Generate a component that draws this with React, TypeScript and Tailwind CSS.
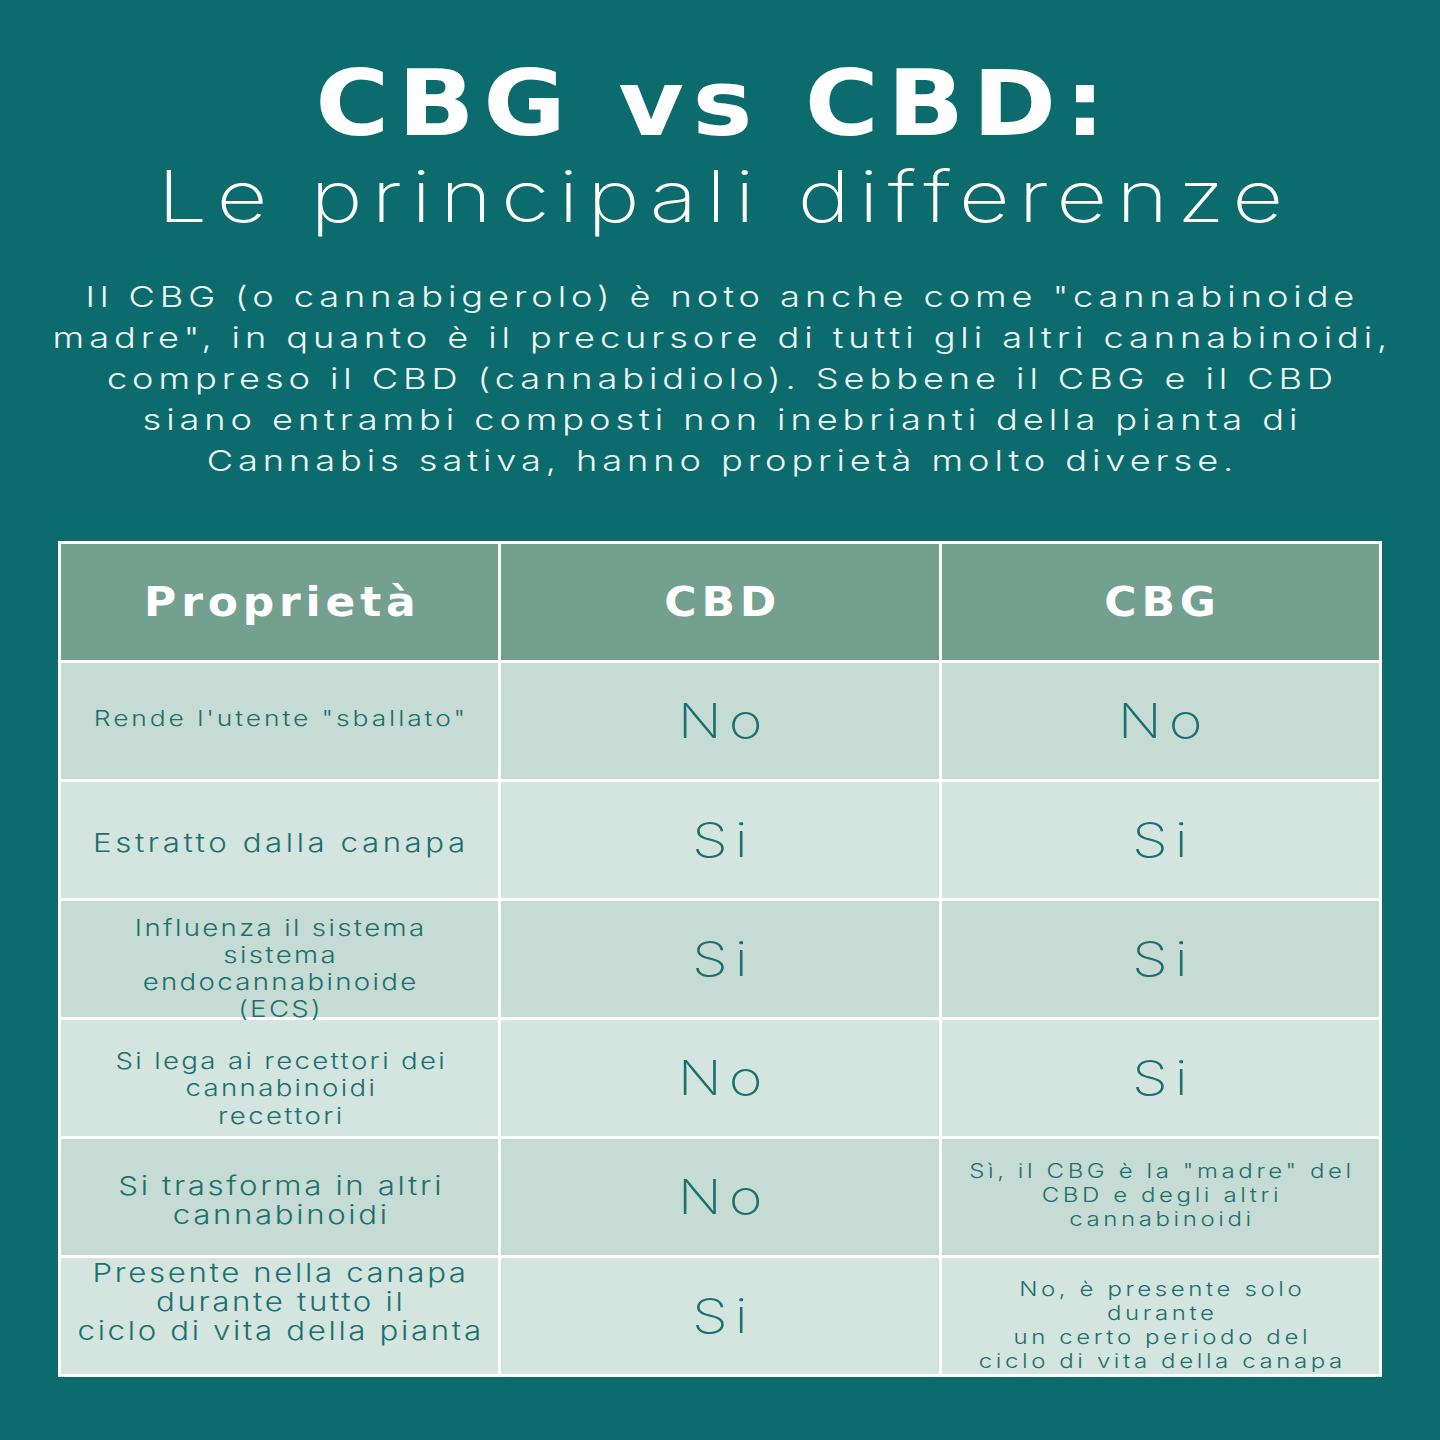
import React from 'react';

interface Row {
  label: string[];
  labelSize: string;
  cbd: string;
  cbg: string[];
  cbgBig: boolean;
  cbgShift?: string;
  tone: 'dark' | 'light';
}

const rows: Row[] = [
  { label: ["Rende l'utente \"sballato\""], labelSize: 'text-[22px] leading-[27px] tracking-[0.11em] -translate-y-[3px]', cbd: 'No', cbg: ['No'], cbgBig: true, tone: 'dark' },
  { label: ['Estratto dalla canapa'], labelSize: 'text-[26px] leading-[29px] tracking-[0.115em] translate-y-[2px]', cbd: 'Si', cbg: ['Si'], cbgBig: true, tone: 'light' },
  {
    label: ['Influenza il sistema', 'sistema', 'endocannabinoide', '(ECS)'],
    labelSize: 'text-[23px] leading-[27px] tracking-[0.085em] translate-y-[10px]',
    cbd: 'Si',
    cbg: ['Si'],
    cbgBig: true,
    tone: 'dark',
  },
  {
    label: ['Si lega ai recettori dei', 'cannabinoidi', 'recettori'],
    labelSize: 'text-[23px] leading-[27.5px] tracking-[0.085em] translate-y-[11px]',
    cbd: 'No',
    cbg: ['Si'],
    cbgBig: true,
    tone: 'light',
  },
  {
    label: ['Si trasforma in altri', 'cannabinoidi'],
    labelSize: 'text-[26px] leading-[29px] tracking-[0.085em] translate-y-[3px]',
    cbd: 'No',
    cbg: ['Sì, il CBG è la "madre" del', 'CBD e degli altri', 'cannabinoidi'],
    cbgBig: false,
    cbgShift: '-translate-y-[2px]',
    tone: 'dark',
  },
  {
    label: ['Presente nella canapa', 'durante tutto il', 'ciclo di vita della pianta'],
    labelSize: 'text-[26px] leading-[29px] tracking-[0.085em] -translate-y-[15px]',
    cbd: 'Si',
    cbg: ['No, è presente solo', 'durante', 'un certo periodo del', 'ciclo di vita della canapa'],
    cbgBig: false,
    cbgShift: 'translate-y-[9px]',
    tone: 'light',
  },
];

const intro = [
  'Il CBG (o cannabigerolo) è noto anche come "cannabinoide',
  'madre", in quanto è il precursore di tutti gli altri cannabinoidi,',
  'compreso il CBD (cannabidiolo). Sebbene il CBG e il CBD',
  'siano entrambi composti non inebrianti della pianta di',
  'Cannabis sativa, hanno proprietà molto diverse.',
];

export default function App() {
  return (
    <div className="w-[1440px] h-[1440px] bg-[#0c6b6c] text-white font-['Inter',sans-serif] overflow-hidden">
      <div className="flex flex-col items-center pt-[56px]">
        <h1 className="font-['DejaVu_Sans',sans-serif] font-bold text-[90px] leading-[96px] tracking-[0.085em] mr-[12px] scale-x-[1.12]">
          CBG vs CBD:
        </h1>
        <h2 className="font-extralight text-[71px] leading-[88px] tracking-[0.1em] pl-[0.1em] scale-x-[1.25]">
          Le principali differenze
        </h2>
      </div>

      <div className="mt-[36px] flex flex-col items-center text-[29px] leading-[41px] font-light tracking-[0.135em] text-[#eef7f5] scale-x-[1.25]">
        {intro.map((line) => (
          <p key={line} className="pl-[0.135em]">
            {line}
          </p>
        ))}
      </div>

      <div className="mt-[60px] mx-[58px] grid grid-cols-3 gap-[3px] bg-white p-[3px]">
        <HeaderCell>Proprietà</HeaderCell>
        <HeaderCell>CBD</HeaderCell>
        <HeaderCell>CBG</HeaderCell>

        {rows.map((row, i) => {
          const bg = row.tone === 'dark' ? 'bg-[#c6dbd3]' : 'bg-[#d4e4df]';
          return (
            <React.Fragment key={i}>
              <div className={`${bg} h-[116px] flex items-center justify-center text-center text-[#1b7070] font-light`}>
                <div className={`flex flex-col items-center scale-x-[1.2] ${row.labelSize}`}>
                  {row.label.map((l) => (
                    <span key={l} className="pl-[0.085em]">
                      {l}
                    </span>
                  ))}
                </div>
              </div>
              <div className={`${bg} h-[116px] flex items-center justify-center`}>
                <BigValue>{row.cbd}</BigValue>
              </div>
              <div className={`${bg} h-[116px] flex flex-col items-center justify-center text-center text-[#1b7070] font-light`}>
                {row.cbgBig ? (
                  <BigValue>{row.cbg[0]}</BigValue>
                ) : (
                  <div className={`flex flex-col items-center text-[20px] leading-[24px] tracking-[0.15em] scale-x-[1.2] ${row.cbgShift ?? ''}`}>
                    {row.cbg.map((l) => (
                      <span key={l} className="pl-[0.15em]">
                        {l}
                      </span>
                    ))}
                  </div>
                )}
              </div>
            </React.Fragment>
          );
        })}
      </div>
    </div>
  );
}

function BigValue({ children }: { children: React.ReactNode }) {
  return (
    <span className="inline-block text-[#1b7070] text-[48px] leading-none font-extralight tracking-[0.12em] pl-[0.12em] scale-x-[1.2]">
      {children}
    </span>
  );
}

function HeaderCell({ children }: { children: React.ReactNode }) {
  return (
    <div className="bg-[#73a08f] h-[116px] flex items-center justify-center">
      <span className="inline-block font-['DejaVu_Sans',sans-serif] font-bold text-[40px] tracking-[0.11em] pl-[0.11em] scale-x-[1.1] text-white">
        {children}
      </span>
    </div>
  );
}
